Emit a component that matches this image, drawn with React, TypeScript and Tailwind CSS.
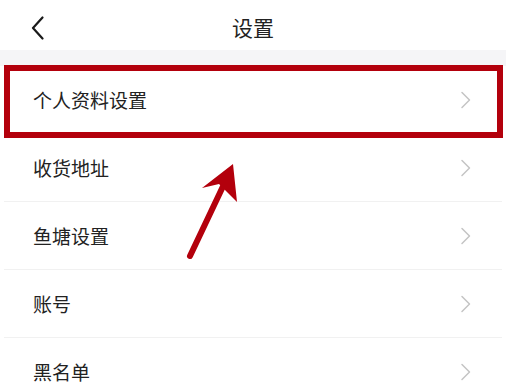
import React from "react";

const items = ["个人资料设置", "收货地址", "鱼塘设置", "账号", "黑名单"];

function Chevron() {
  return (
    <svg width="12" height="18" viewBox="0 0 12 18" fill="none">
      <path d="M2 1.5 L9.5 9 L2 16.5" stroke="#c4c4c4" strokeWidth="1.5" strokeLinecap="round" strokeLinejoin="round" />
    </svg>
  );
}

export default function App() {
  return (
    <div
      className="relative w-[506px] h-[385px] overflow-hidden bg-white text-[#222]"
      style={{ fontFamily: '"Noto Sans CJK SC", "Noto Sans", sans-serif' }}
    >
      <header className="relative h-[50px] flex items-center justify-center">
        <div className="absolute left-[30px] top-[16px]">
          <svg width="16" height="24" viewBox="0 0 16 24" fill="none">
            <path d="M12.5 1.5 L3 12 L12.5 22.5" stroke="#1a1a1a" strokeWidth="2.2" strokeLinecap="round" strokeLinejoin="round" />
          </svg>
        </div>
        <h1 className="text-[21px] leading-none font-normal mt-[4px]">设置</h1>
      </header>
      <div className="h-[16px] bg-[#f5f5f7]" />
      <ul>
        {items.map((t) => (
          <li key={t} className="h-[68px] flex items-center justify-between pl-[33px] pr-[30px] border-b border-[#f1f1f1] mx-[4px]">
            <span className="text-[19px] leading-none -ml-[4px]">{t}</span>
            <Chevron />
          </li>
        ))}
      </ul>
      <div className="absolute left-[4px] top-[65px] w-[499px] h-[73px] border-[6px] border-[#b3000c]" />
      <svg className="absolute left-0 top-0" width="506" height="385" viewBox="0 0 506 385">
        <line x1="190" y1="256" x2="226" y2="180" stroke="#b3000c" strokeWidth="6" strokeLinecap="round" />
        <path d="M233 164 L202 188 L219 184 L237 202 Z" fill="#b3000c" />
      </svg>
    </div>
  );
}
